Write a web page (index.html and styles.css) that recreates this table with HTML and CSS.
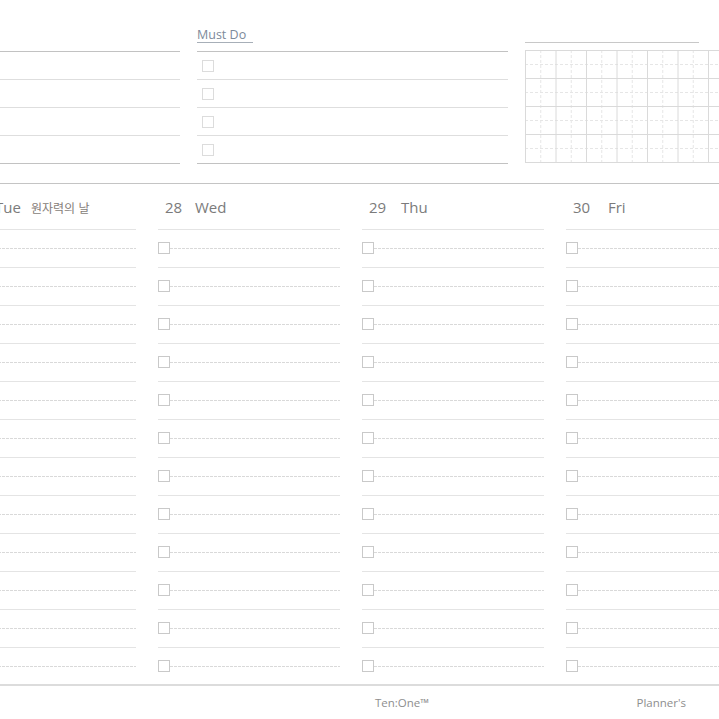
FILE: index.html
```html
<!DOCTYPE html>
<html lang="ko">
<head>
<meta charset="utf-8">
<title>Weekly Planner</title>
<link rel="stylesheet" href="styles.css">
</head>
<body>
<div class="page">
  <section class="top">
    <div class="notes">
      <div class="lines">
        <div class="line"></div>
        <div class="line"></div>
        <div class="line"></div>
        <div class="line"></div>
      </div>
    </div>
    <div class="must">
      <div class="must-title">Must Do</div>
      <div class="lines">
        <div class="line"><span class="mbox"></span></div>
        <div class="line"><span class="mbox"></span></div>
        <div class="line"><span class="mbox"></span></div>
        <div class="line"><span class="mbox"></span></div>
      </div>
    </div>
    <div class="gridcol">
      <div class="grid-rule"></div>
      <svg class="grid" width="194" height="114" viewBox="0 0 194 114">
        <g stroke="#e6e6e6" stroke-width="1" stroke-dasharray="3 2">
          <line x1="15.75" y1="0" x2="15.75" y2="113"/>
          <line x1="46.25" y1="0" x2="46.25" y2="113"/>
          <line x1="76.75" y1="0" x2="76.75" y2="113"/>
          <line x1="107.25" y1="0" x2="107.25" y2="113"/>
          <line x1="137.75" y1="0" x2="137.75" y2="113"/>
          <line x1="168.25" y1="0" x2="168.25" y2="113"/>
          <line x1="0" y1="14.5" x2="194" y2="14.5"/>
          <line x1="0" y1="42.5" x2="194" y2="42.5"/>
          <line x1="0" y1="70.5" x2="194" y2="70.5"/>
          <line x1="0" y1="98.5" x2="194" y2="98.5"/>
        </g>
        <g stroke="#dadada" stroke-width="1">
          <line x1="0.5" y1="0" x2="0.5" y2="113"/>
          <line x1="31" y1="0" x2="31" y2="113"/>
          <line x1="61.5" y1="0" x2="61.5" y2="113"/>
          <line x1="92" y1="0" x2="92" y2="113"/>
          <line x1="122.5" y1="0" x2="122.5" y2="113"/>
          <line x1="153" y1="0" x2="153" y2="113"/>
          <line x1="183.5" y1="0" x2="183.5" y2="113"/>
          <line x1="0" y1="0.5" x2="194" y2="0.5"/>
          <line x1="0" y1="28.5" x2="194" y2="28.5"/>
          <line x1="0" y1="56.5" x2="194" y2="56.5"/>
          <line x1="0" y1="84.5" x2="194" y2="84.5"/>
          <line x1="0" y1="112.5" x2="194" y2="112.5"/>
        </g>
      </svg>
    </div>
  </section>

  <section class="days">
    <div class="day day-first">
      <div class="day-head"><span class="num">27</span><span class="dname">Tue</span><span class="holiday">원자력의 날</span></div>
      <div class="row"><span class="cb"></span><span class="dash"></span></div>
      <div class="row"><span class="cb"></span><span class="dash"></span></div>
      <div class="row"><span class="cb"></span><span class="dash"></span></div>
      <div class="row"><span class="cb"></span><span class="dash"></span></div>
      <div class="row"><span class="cb"></span><span class="dash"></span></div>
      <div class="row"><span class="cb"></span><span class="dash"></span></div>
      <div class="row"><span class="cb"></span><span class="dash"></span></div>
      <div class="row"><span class="cb"></span><span class="dash"></span></div>
      <div class="row"><span class="cb"></span><span class="dash"></span></div>
      <div class="row"><span class="cb"></span><span class="dash"></span></div>
      <div class="row"><span class="cb"></span><span class="dash"></span></div>
      <div class="row"><span class="cb"></span><span class="dash"></span></div>
    </div>
    <div class="day">
      <div class="day-head"><span class="num">28</span><span class="dname">Wed</span></div>
      <div class="row"><span class="cb"></span><span class="dash"></span></div>
      <div class="row"><span class="cb"></span><span class="dash"></span></div>
      <div class="row"><span class="cb"></span><span class="dash"></span></div>
      <div class="row"><span class="cb"></span><span class="dash"></span></div>
      <div class="row"><span class="cb"></span><span class="dash"></span></div>
      <div class="row"><span class="cb"></span><span class="dash"></span></div>
      <div class="row"><span class="cb"></span><span class="dash"></span></div>
      <div class="row"><span class="cb"></span><span class="dash"></span></div>
      <div class="row"><span class="cb"></span><span class="dash"></span></div>
      <div class="row"><span class="cb"></span><span class="dash"></span></div>
      <div class="row"><span class="cb"></span><span class="dash"></span></div>
      <div class="row"><span class="cb"></span><span class="dash"></span></div>
    </div>
    <div class="day day-thu">
      <div class="day-head"><span class="num">29</span><span class="dname">Thu</span></div>
      <div class="row"><span class="cb"></span><span class="dash"></span></div>
      <div class="row"><span class="cb"></span><span class="dash"></span></div>
      <div class="row"><span class="cb"></span><span class="dash"></span></div>
      <div class="row"><span class="cb"></span><span class="dash"></span></div>
      <div class="row"><span class="cb"></span><span class="dash"></span></div>
      <div class="row"><span class="cb"></span><span class="dash"></span></div>
      <div class="row"><span class="cb"></span><span class="dash"></span></div>
      <div class="row"><span class="cb"></span><span class="dash"></span></div>
      <div class="row"><span class="cb"></span><span class="dash"></span></div>
      <div class="row"><span class="cb"></span><span class="dash"></span></div>
      <div class="row"><span class="cb"></span><span class="dash"></span></div>
      <div class="row"><span class="cb"></span><span class="dash"></span></div>
    </div>
    <div class="day day-fri">
      <div class="day-head"><span class="num">30</span><span class="dname">Fri</span></div>
      <div class="row"><span class="cb"></span><span class="dash"></span></div>
      <div class="row"><span class="cb"></span><span class="dash"></span></div>
      <div class="row"><span class="cb"></span><span class="dash"></span></div>
      <div class="row"><span class="cb"></span><span class="dash"></span></div>
      <div class="row"><span class="cb"></span><span class="dash"></span></div>
      <div class="row"><span class="cb"></span><span class="dash"></span></div>
      <div class="row"><span class="cb"></span><span class="dash"></span></div>
      <div class="row"><span class="cb"></span><span class="dash"></span></div>
      <div class="row"><span class="cb"></span><span class="dash"></span></div>
      <div class="row"><span class="cb"></span><span class="dash"></span></div>
      <div class="row"><span class="cb"></span><span class="dash"></span></div>
      <div class="row"><span class="cb"></span><span class="dash"></span></div>
    </div>
  </section>

  <footer class="footer">
    <span class="brand">Ten:One™</span>
    <span class="brand2">Planner's</span>
  </footer>
</div>
</body>
</html>
```

FILE: styles.css
```css
html, body {
  margin: 0;
  padding: 0;
  background: #ffffff;
  overflow: hidden;
}
body {
  font-family: "Open Sans", "Noto Sans CJK KR", sans-serif;
  color: #7a7a7a;
}
.page {
  width: 719px;
  height: 719px;
  overflow: hidden;
}

/* ---------- top area ---------- */
.top {
  display: flex;
  gap: 17px;
  height: 184px;
  box-sizing: border-box;
  border-bottom: 1px solid #c4c4c4;
}
.notes {
  width: 180px;
  flex: none;
  padding-top: 51px;
}
.lines {
  border-top: 1px solid #c2c2c2;
}
.line {
  height: 28px;
  box-sizing: border-box;
  border-bottom: 1px solid #dedede;
  padding-top: 8px;
  padding-left: 5px;
}
.line:last-child {
  border-bottom-color: #c2c2c2;
}
.must {
  width: 311px;
  flex: none;
}
.must-title {
  display: inline-block;
  margin-top: 28px;
  margin-bottom: 8px;
  padding-right: 7px;
  font-size: 12.5px;
  line-height: 14px;
  height: 14px;
  color: #7d8a9a;
  border-bottom: 1px solid #a7afb8;
}
.mbox {
  display: block;
  width: 10px;
  height: 10px;
  border: 1px solid #dcdcdc;
}
.gridcol {
  flex: none;
  width: 194px;
  padding-top: 42px;
}
.grid-rule {
  width: 174px;
  height: 1px;
  background: #c8c8c8;
  margin-bottom: 7px;
}
.grid {
  display: block;
}

/* ---------- days ---------- */
.days {
  display: flex;
  gap: 22px;
  margin-left: -46px;
  border-bottom: 2px solid #dcdcdc;
}
.day {
  width: 182px;
  flex: none;
}
.day-head {
  height: 45px;
  box-sizing: border-box;
  padding-top: 13px;
  display: flex;
  align-items: baseline;
  font-size: 15px;
  line-height: 20px;
  color: #7b7b7b;
}
.num {
  margin-left: 7px;
  width: 30px;
}
.day-first .num {
  margin-left: 11px;
}
.day-thu .num {
  width: 32px;
}
.day-fri .num {
  width: 35px;
}
.holiday {
  margin-left: 10px;
  font-family: "Noto Sans CJK KR", sans-serif;
  font-size: 12px;
  color: #857d78;
}
.row {
  height: 38px;
  box-sizing: border-box;
  border-top: 1px solid #e4e4e4;
  padding-top: 12px;
  display: flex;
  align-items: flex-start;
}
.row:last-child {
  height: 37px;
}
.cb {
  width: 10px;
  height: 10px;
  flex: none;
  border: 1px solid #c9c9c9;
}
.dash {
  flex: 1;
  height: 1px;
  margin-top: 6px;
  background: repeating-linear-gradient(90deg, #d9d9d9 0 3px, transparent 3px 4px);
}

/* ---------- footer ---------- */
.footer {
  display: flex;
  align-items: center;
  height: 32px;
  padding-left: 375px;
  padding-right: 33px;
  font-size: 11.5px;
  color: #8e8e8e;
}
.brand2 {
  margin-left: auto;
}
```
